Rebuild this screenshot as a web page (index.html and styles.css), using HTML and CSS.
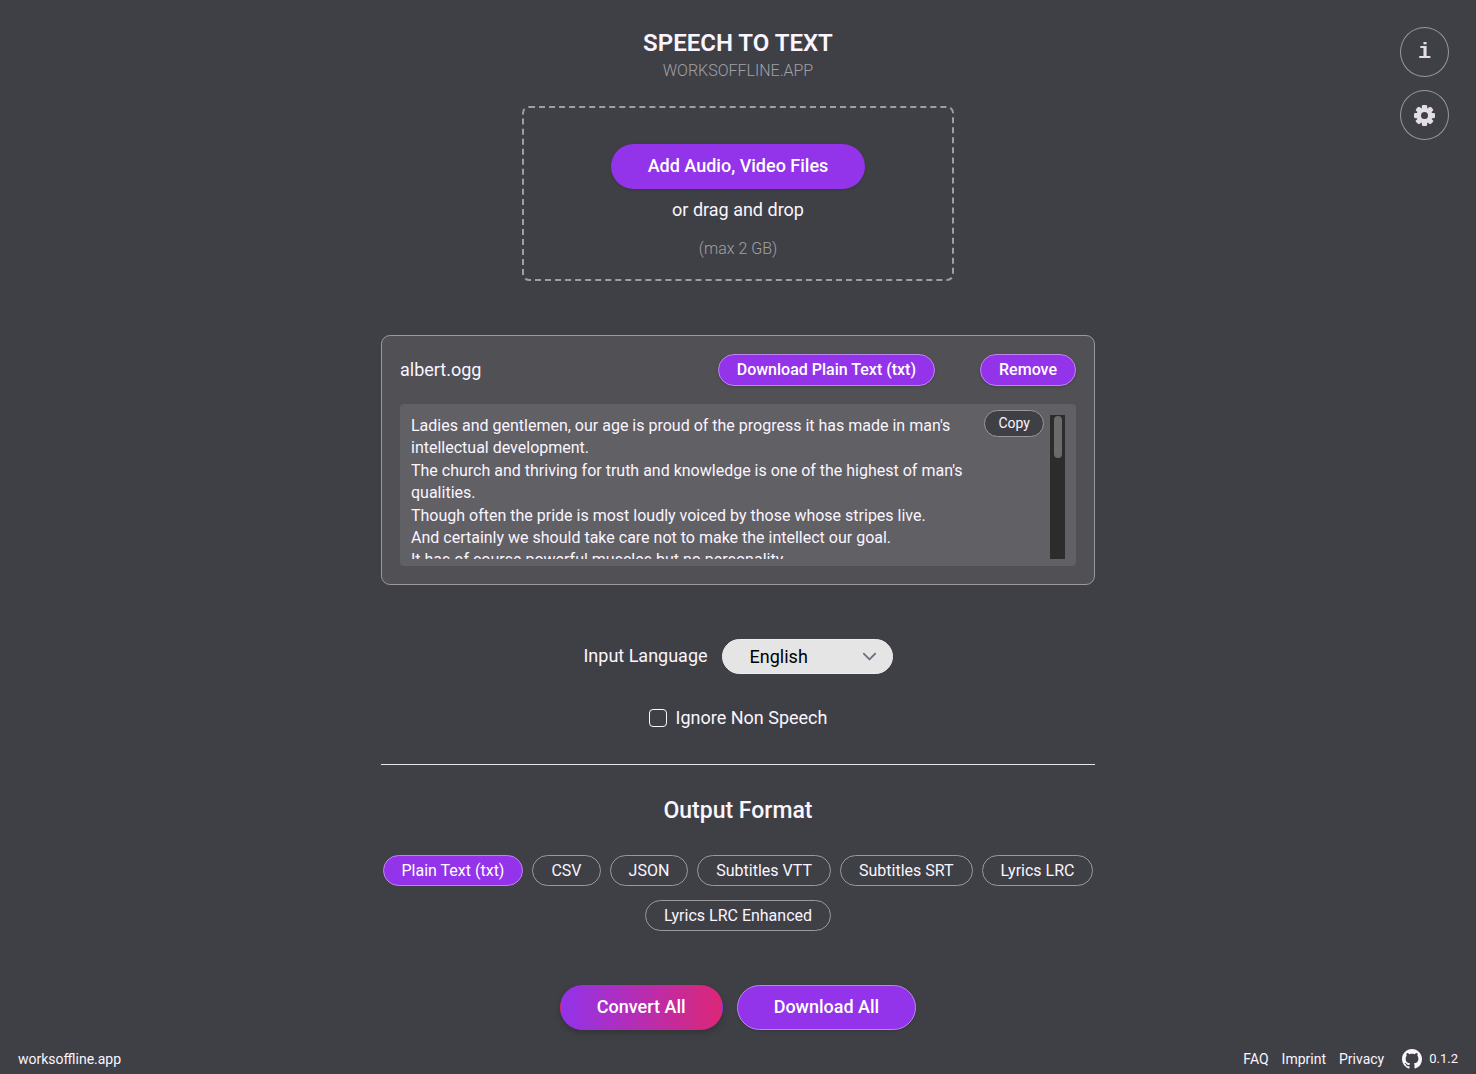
FILE: index.html
```
<!DOCTYPE html>
<html lang="en">
<head>
  <meta charset="UTF-8" />
  <meta name="viewport" content="width=device-width, initial-scale=1.0"/>
  <title>Speech to Text - worksoffline.app</title>
  <link rel="stylesheet" href="styles.css">
</head>
<body>
  <div class="corner-menu">
    <button type="button" class="round-btn info-btn" aria-label="Info">i</button>
    <button type="button" class="round-btn" aria-label="Settings">
      <svg class="gear" viewBox="-12 -12 24 24">
        <g fill="currentColor">
          <rect x="-3" y="-12" width="6" height="24" rx="1.5"/>
          <rect x="-3" y="-12" width="6" height="24" rx="1.5" transform="rotate(45)"/>
          <rect x="-3" y="-12" width="6" height="24" rx="1.5" transform="rotate(90)"/>
          <rect x="-3" y="-12" width="6" height="24" rx="1.5" transform="rotate(135)"/>
          <circle r="9"/>
        </g>
        <circle r="4" fill="#3f4045"/>
      </svg>
    </button>
  </div>

  <main>
    <header>
      <h1>SPEECH TO TEXT</h1>
      <p class="subtitle">WORKSOFFLINE.APP</p>
    </header>

    <section class="dropzone">
      <button type="button" class="btn btn-large">Add Audio, Video Files</button>
      <p class="drop-text">or drag and drop</p>
      <p class="drop-limit">(max 2 GB)</p>
    </section>

    <section class="file-card">
      <div class="file-head">
        <span class="file-name">albert.ogg</span>
        <button type="button" class="btn btn-outlined">Download Plain Text (txt)</button>
        <button type="button" class="btn btn-outlined">Remove</button>
      </div>
      <div class="transcript">
        <div class="transcript-scroll" tabindex="0">
          <p>Ladies and gentlemen, our age is proud of the progress it has made in man's intellectual development.</p>
          <p>The church and thriving for truth and knowledge is one of the highest of man's qualities.</p>
          <p>Though often the pride is most loudly voiced by those whose stripes live.</p>
          <p>And certainly we should take care not to make the intellect our goal.</p>
          <p>It has of course powerful muscles but no personality.</p>
        </div>
        <div class="scroll-track"><div class="scroll-thumb"></div></div>
        <button type="button" class="copy-btn">Copy</button>
      </div>
    </section>

    <form class="options">
      <div class="language-row">
        <label for="language">Input Language</label>
        <div class="select-wrap">
          <select id="language">
            <option>English</option>
            <option>German</option>
            <option>French</option>
            <option>Spanish</option>
          </select>
          <svg class="chevron" viewBox="0 0 20 20" fill="none" stroke="currentColor" stroke-width="2" stroke-linecap="round" stroke-linejoin="round">
            <path d="M4 7l6 6 6-6"/>
          </svg>
        </div>
      </div>
      <div class="check-row">
        <input type="checkbox" id="ignoreNonSpeech" />
        <label for="ignoreNonSpeech">Ignore Non Speech</label>
      </div>
    </form>

    <hr>

    <h2>Output Format</h2>
    <div class="formats">
      <button type="button" class="chip active">Plain Text (txt)</button>
      <button type="button" class="chip">CSV</button>
      <button type="button" class="chip">JSON</button>
      <button type="button" class="chip">Subtitles VTT</button>
      <button type="button" class="chip">Subtitles SRT</button>
      <button type="button" class="chip">Lyrics LRC</button>
      <button type="button" class="chip">Lyrics LRC Enhanced</button>
    </div>

    <div class="actions">
      <button type="button" class="btn btn-large btn-convert">Convert All</button>
      <button type="button" class="btn btn-large btn-outlined">Download All</button>
    </div>
  </main>

  <footer>
    <a href="#">worksoffline.app</a>
    <nav>
      <a href="#">FAQ</a>
      <a href="#">Imprint</a>
      <a href="#">Privacy</a>
      <a href="#" class="version">
        <svg class="github" viewBox="0 0 16 16" fill="currentColor">
          <path d="M8 0C3.58 0 0 3.58 0 8c0 3.54 2.29 6.53 5.47 7.59.4.07.55-.17.55-.38 0-.19-.01-.82-.01-1.49-2.01.37-2.53-.49-2.69-.94-.09-.23-.48-.94-.82-1.13-.28-.15-.68-.52-.01-.53.63-.01 1.08.58 1.23.82.72 1.21 1.87.87 2.33.66.07-.52.28-.87.51-1.07-1.78-.2-3.64-.89-3.64-3.95 0-.87.31-1.59.82-2.15-.08-.2-.36-1.02.08-2.12 0 0 .67-.21 2.2.82.64-.18 1.32-.27 2-.27s1.36.09 2 .27c1.53-1.04 2.2-.82 2.2-.82.44 1.1.16 1.92.08 2.12.51.56.82 1.27.82 2.15 0 3.07-1.87 3.75-3.65 3.95.29.25.54.73.54 1.48 0 1.07-.01 1.93-.01 2.2 0 .21.15.46.55.38A8.01 8.01 0 0016 8c0-4.42-3.58-8-8-8z"/>
        </svg>
        <span>0.1.2</span>
      </a>
    </nav>
  </footer>
</body>
</html>
```
FILE: styles.css
```
* {
  margin: 0;
  padding: 0;
  box-sizing: border-box;
}

body {
  min-height: 100vh;
  display: flex;
  flex-direction: column;
  background: #3f4045;
  font-family: Roboto, "Liberation Sans", sans-serif;
  font-size: 18px;
  line-height: 27px;
  color: #faf5ff;
}

button,
select {
  font-family: inherit;
  color: inherit;
  cursor: pointer;
}

a {
  color: inherit;
  text-decoration: none;
}

.corner-menu {
  position: fixed;
  top: 27px;
  right: 27px;
  display: flex;
  flex-direction: column;
  gap: 13px;
}

.round-btn {
  width: 49px;
  height: 50px;
  display: flex;
  align-items: center;
  justify-content: center;
  border: 1px solid #99999d;
  border-radius: 50%;
  background: transparent;
  color: #e3dde8;
}

.info-btn {
  font-family: "Liberation Mono", monospace;
  font-size: 22px;
  font-weight: bold;
}

.gear {
  width: 21px;
  height: 21px;
}

main {
  flex: 1;
  width: 100%;
  max-width: 714px;
  margin: 0 auto;
  padding-top: 27px;
  display: flex;
  flex-direction: column;
  align-items: center;
}

header {
  text-align: center;
}

h1 {
  font-size: 24px;
  line-height: 32px;
  font-weight: 600;
}

.subtitle {
  font-size: 16px;
  line-height: 24px;
  font-weight: 300;
  color: #a1a0a5;
}

.dropzone {
  width: 100%;
  max-width: 432px;
  margin-top: 23px;
  padding: 36px 0 17px;
  display: flex;
  flex-direction: column;
  align-items: center;
  border: 2px dashed #9f9fa2;
  border-radius: 7px;
}

.btn {
  border: 1px solid transparent;
  border-radius: 23px;
  background: #9333ea;
  color: #fff;
  font-size: 16px;
  font-weight: 500;
  height: 32px;
  padding: 0 18px 1px;
  box-shadow: 0 1px 3px rgba(0, 0, 0, 0.15);
}

.btn-large {
  height: 45px;
  padding: 0 36px 2px;
  font-size: 18px;
}

.btn-outlined {
  border-color: #be85f2;
}

.btn-convert {
  background: linear-gradient(to right, #9333ea, #db2777);
  box-shadow: 0 3px 6px rgba(0, 0, 0, 0.2);
}

.drop-text {
  margin-top: 7px;
}

.drop-limit {
  margin-top: 12px;
  font-size: 16px;
  font-weight: 300;
  color: #a1a0a5;
}

.file-card {
  width: 100%;
  margin-top: 54px;
  padding: 18px;
  border: 1px solid #99999d;
  border-radius: 9px;
  background: #515055;
}

.file-head {
  display: flex;
  align-items: center;
  gap: 45px;
}

.file-name {
  flex: 1;
  padding-bottom: 2px;
}

.transcript {
  position: relative;
  display: flex;
  margin-top: 18px;
  padding: 11px 11px 7px;
  border-radius: 4px;
  background: #616065;
}

.transcript-scroll {
  flex: 1;
  height: 144px;
  padding-right: 72px;
  overflow-y: auto;
  scrollbar-width: none;
  font-size: 16px;
  line-height: 1.4;
}

.scroll-track {
  width: 15px;
  padding: 1px 3px 0 4px;
  background: #2c2c2c;
}

.scroll-thumb {
  height: 42px;
  border-radius: 4px;
  background: #6b6b6b;
}

.copy-btn {
  position: absolute;
  top: 6px;
  right: 32px;
  height: 27px;
  padding: 0 13px 1px;
  border: 1px solid #99999d;
  border-radius: 14px;
  background: #3f4045;
  font-size: 14px;
}

.options {
  display: flex;
  flex-direction: column;
  align-items: center;
  gap: 30px;
  margin-top: 54px;
}

.language-row {
  display: flex;
  align-items: center;
  gap: 14px;
}

.language-row label {
  padding-bottom: 2px;
}

.select-wrap {
  position: relative;
}

select {
  display: block;
  appearance: none;
  width: 171px;
  height: 35px;
  padding: 0 45px 0 27px;
  border: 1px solid #efefef;
  border-radius: 18px;
  background: #e5e5e5;
  color: #000;
  font-size: 18px;
}

.chevron {
  position: absolute;
  top: 8px;
  right: 14px;
  width: 19px;
  height: 19px;
  color: #6b7280;
  pointer-events: none;
}

.check-row {
  display: flex;
  align-items: center;
  gap: 9px;
}

.check-row input {
  appearance: none;
  width: 18px;
  height: 18px;
  border: 1px solid #faf5ff;
  border-radius: 4px;
}

.check-row input:checked {
  background: #9333ea;
}

hr {
  width: 100%;
  margin-top: 33px;
  border: none;
  border-top: 1px solid #e5e5e5;
}

h2 {
  margin-top: 31px;
  font-size: 23px;
  line-height: 30px;
  font-weight: 500;
}

.formats {
  display: flex;
  flex-wrap: wrap;
  justify-content: center;
  gap: 14px 9px;
  margin-top: 29px;
}

.chip {
  height: 31px;
  padding: 0 18px;
  border: 1px solid #99999d;
  border-radius: 16px;
  background: transparent;
  font-size: 16px;
}

.chip.active {
  border-color: #be85f2;
  background: #9333ea;
  color: #fff;
}

.actions {
  display: flex;
  gap: 14px;
  margin-top: 54px;
}

footer {
  display: flex;
  justify-content: space-between;
  align-items: center;
  padding: 15px 18px 1px;
  font-size: 14px;
  line-height: 28px;
}

footer nav {
  display: flex;
  align-items: center;
  gap: 13px;
}

.version {
  display: flex;
  align-items: center;
  gap: 7px;
  margin-left: 5px;
  font-size: 13px;
}

.github {
  width: 20px;
  height: 20px;
}
```
